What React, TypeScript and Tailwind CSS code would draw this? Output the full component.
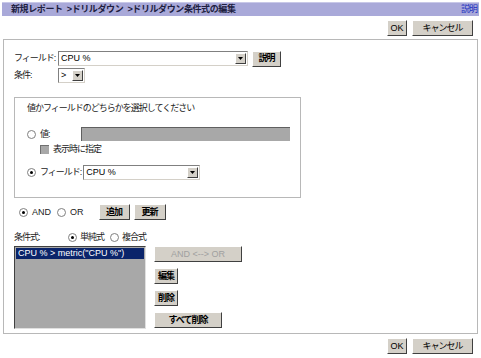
import React from "react";

const font = { fontFamily: '"Liberation Sans", "Noto Sans CJK JP", sans-serif' };

function J({ children, className = "" }: { children: React.ReactNode; className?: string }) {
  return <span className={`tracking-[-1px] ${className}`}>{children}</span>;
}

function Btn({ children, className = "", disabled = false }: { children: React.ReactNode; className?: string; disabled?: boolean }) {
  return (
    <div
      className={`flex items-center justify-center h-[16px] bg-[#d4d0c8] border border-t-[#ffffff] border-l-[#ffffff] border-r-[#404040] border-b-[#404040] text-[9px] leading-none whitespace-nowrap ${disabled ? "text-[#a0a0a0]" : "text-black font-bold"} ${className}`}
    >
      {children}
    </div>
  );
}

function Select({ value, className = "" }: { value: string; className?: string }) {
  return (
    <div className={`flex items-center h-[15px] bg-white border border-t-[#808080] border-l-[#808080] border-r-[#d4d0c8] border-b-[#d4d0c8] ${className}`}>
      <span className="flex-1 pl-[2px] text-[9px] leading-none text-black whitespace-nowrap">{value}</span>
      <div className="w-[11px] h-[11px] mr-[1px] bg-[#d4d0c8] border border-t-white border-l-white border-r-[#404040] border-b-[#404040] flex items-center justify-center">
        <svg width="5" height="3" viewBox="0 0 5 3"><path d="M0 0h5L2.5 3z" fill="#000" /></svg>
      </div>
    </div>
  );
}

function Radio({ checked }: { checked: boolean }) {
  return (
    <div className="w-[9px] h-[9px] rounded-full border border-[#808080] bg-white flex items-center justify-center shrink-0">
      {checked && <div className="w-[3px] h-[3px] rounded-full bg-black" />}
    </div>
  );
}

export default function App() {
  return (
    <div className="w-[481px] h-[358px] bg-white text-[9px] leading-none text-[#222] whitespace-nowrap" style={font}>
      <div className="mx-[2px] mt-[2px] h-[14px] bg-[#a9a9d9] border-t border-[#c8c8e8] flex items-center justify-between pl-[9px] pr-[2px]">
        <span className="font-bold text-[9px] text-[#202040] tracking-[-0.4px] whitespace-pre">新規レポート  &gt;ドリルダウン  &gt;ドリルダウン条件式の編集</span>
        <J className="text-[9px] text-[#2030c0]">説明</J>
      </div>
      <div className="flex justify-end gap-[5px] mt-[4px] mr-[8px]">
        <Btn className="w-[20px] !font-normal">OK</Btn>
        <Btn className="w-[61px] !font-normal"><J>キャンセル</J></Btn>
      </div>
      <div className="mx-[3px] mt-[3px] h-[295px] border border-[#b8b8b8] pl-[10px] pt-[11px]">
        <div className="flex items-center h-[15px]">
          <J className="w-[44px]">フィールド:</J>
          <Select value="CPU %" className="w-[190px]" />
          <Btn className="w-[29px] ml-[4px]"><J>説明</J></Btn>
        </div>
        <div className="flex items-center h-[14px] mt-[2px]">
          <J className="w-[44px]">条件:</J>
          <Select value=">" className="w-[27px]" />
        </div>
        <div className="mt-[15px] w-[287px] h-[101px] border border-[#b8b8b8] pl-[12px] pt-[6px]">
          <div className="h-[10px]"><J>値かフィールドのどちらかを選択してください</J></div>
          <div className="flex items-center mt-[13px] h-[14px]">
            <Radio checked={false} />
            <J className="ml-[4px] w-[41px]">値:</J>
            <div className="w-[209px] h-[14px] bg-[#a8a8a8] border-t border-l border-[#606060]" />
          </div>
          <div className="flex items-center mt-[3px] h-[10px] ml-[13px]">
            <div className="w-[9px] h-[9px] bg-[#a8a8a8] border-t border-l border-[#707070]" />
            <J className="ml-[4px]">表示時に指定</J>
          </div>
          <div className="flex items-center mt-[11px] h-[15px]">
            <Radio checked={true} />
            <J className="ml-[4px]">フィールド:</J>
            <Select value="CPU %" className="w-[117px] ml-[2px]" />
          </div>
        </div>
        <div className="flex items-center mt-[6px] h-[16px] ml-[5px]">
          <Radio checked={true} />
          <span className="ml-[4px]">AND</span>
          <div className="ml-[6px]"><Radio checked={false} /></div>
          <span className="ml-[4px]">OR</span>
          <Btn className="w-[31px] ml-[15px]"><J>追加</J></Btn>
          <Btn className="w-[32px] ml-[4px]"><J>更新</J></Btn>
        </div>
        <div className="flex items-center mt-[11px] h-[12px]">
          <J className="w-[54px]">条件式:</J>
          <Radio checked={true} />
          <J className="ml-[3px]">単純式</J>
          <div className="ml-[6px]"><Radio checked={false} /></div>
          <J className="ml-[3px]">複合式</J>
        </div>
        <div className="flex mt-[3px]">
          <div className="w-[132px] h-[83px] bg-[#a8a8a8] border border-t-[#404040] border-l-[#404040] border-r-[#e0e0e0] border-b-[#e0e0e0] p-[1px]">
            <div className="bg-[#0a246a] text-white leading-[11px] pl-[2px]">CPU % &gt; metric("CPU %")</div>
          </div>
          <div className="ml-[8px] flex flex-col items-start">
            <Btn className="w-[88px]" disabled>AND &lt;--&gt; OR</Btn>
            <Btn className="w-[24px] mt-[6px]"><J>編集</J></Btn>
            <Btn className="w-[24px] mt-[6px]"><J>削除</J></Btn>
            <Btn className="w-[68px] mt-[6px]"><J>すべて削除</J></Btn>
          </div>
        </div>
      </div>
      <div className="flex justify-end gap-[5px] mt-[4px] mr-[8px]">
        <Btn className="w-[20px] !font-normal">OK</Btn>
        <Btn className="w-[61px] !font-normal"><J>キャンセル</J></Btn>
      </div>
    </div>
  );
}
